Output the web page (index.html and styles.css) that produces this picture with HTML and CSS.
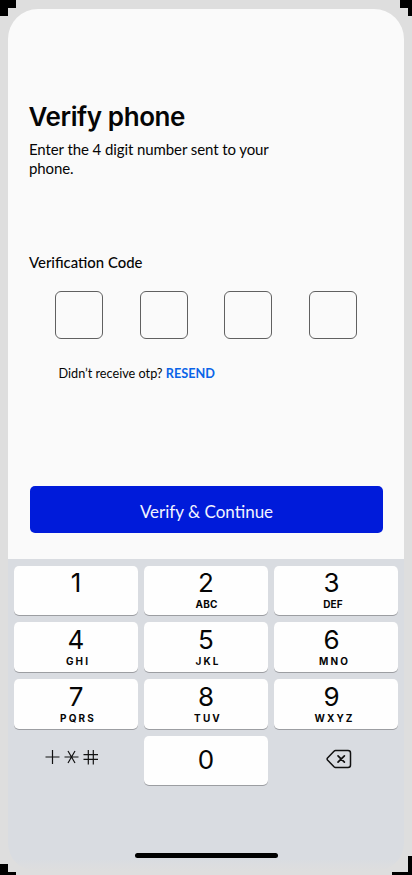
FILE: index.html
```html
<!DOCTYPE html>
<html lang="en">
<head>
<meta charset="utf-8">
<title>Verify phone</title>
<link rel="stylesheet" href="styles.css">
</head>
<body>
<div class="device">
  <main class="screen">
    <h1 class="title">Verify phone</h1>
    <p class="intro">Enter the 4 digit number sent to your<br>phone.</p>
    <h2 class="label">Verification Code</h2>
    <div class="code"><span class="box"></span><span class="box"></span><span class="box"></span><span class="box"></span></div>
    <p class="resend">Didn’t receive otp? <a class="link">RESEND</a></p>
    <button class="submit">Verify &amp; Continue</button>
  </main>
  <section class="keyboard">
    <div class="keys">
      <div class="key"><span class="digit">1</span></div>
      <div class="key"><span class="digit">2</span><span class="letters tight">ABC</span></div>
      <div class="key"><span class="digit">3</span><span class="letters tight">DEF</span></div>
      <div class="key low"><span class="digit">4</span><span class="letters">GHI</span></div>
      <div class="key low"><span class="digit">5</span><span class="letters">JKL</span></div>
      <div class="key low"><span class="digit">6</span><span class="letters">MNO</span></div>
      <div class="key low"><span class="digit">7</span><span class="letters">PQRS</span></div>
      <div class="key low"><span class="digit">8</span><span class="letters">TUV</span></div>
      <div class="key low"><span class="digit">9</span><span class="letters">WXYZ</span></div>
      <div class="plain symbols">
        <svg width="54" height="16" viewBox="0 0 54 16" fill="none" stroke="#111" stroke-width="1.2"><path d="M.5 8H14.500M7.500 1v14M19.500 8H33.500M23 2l7 12M30 2l-7 12M38.500 5.600H53M38.500 10.400H53M43.300 1v14.500M48.300 1v14.500"/></svg>
      </div>
      <div class="key zero"><span class="digit">0</span></div>
      <div class="plain erase">
        <svg width="26" height="20" viewBox="0 0 26 20" fill="none" stroke="#111" stroke-width="1.500" stroke-linejoin="round" stroke-linecap="round"><path d="M9.500 1.500H22Q24.500 1.500 24.500 4V16Q24.500 18.500 22 18.500H9.500Q8.700 18.500 8 17.800L1.500 11Q.7 10 1.500 9L8 2.200Q8.700 1.500 9.500 1.500Z"/><path stroke-width="1.700" d="M12 6.800l6.400 6.400M18.400 6.800L12 13.200"/></svg>
      </div>
    </div>
    <div class="home"></div>
  </section>
  <i class="corner tl-a"></i><i class="corner tl-b"></i>
  <i class="corner tr-a"></i><i class="corner tr-b"></i>
  <i class="corner bl-a"></i><i class="corner bl-b"></i>
  <i class="corner br-a"></i><i class="corner br-b"></i>
</div>
</body>
</html>
```
FILE: styles.css
```css
* { box-sizing: border-box; margin: 0; padding: 0; }
body { background: #dedede; overflow: hidden; }
.device {
  position: relative;
  width: 412px;
  height: 875px;
  padding: 9px 8px 0;
  background: #dedede;
  color: #050505;
  font-family: Lato, sans-serif;
}
.screen {
  height: 550px;
  padding: 92px 21px 0;
  background: #fafafa;
  border-radius: 30px 30px 0 0;
}
.title {
  height: 32px;
  margin-left: -0.5px;
  font: 600 26px/32px Inter, sans-serif;
  letter-spacing: -0.4px;
}
.intro {
  margin-top: 7px;
  font-size: 15px;
  line-height: 19px;
  letter-spacing: -0.09px;
  font-variant-ligatures: common-ligatures;
}
.label {
  margin-top: 73px;
  font-size: 14.9px;
  font-weight: 500;
  line-height: 22px;
}
.code {
  display: flex;
  justify-content: space-between;
  width: 302px;
  margin: 18px 0 0 26px;
}
.box {
  width: 48px;
  height: 48px;
  border: 1px solid #606060;
  border-radius: 6px;
}
.resend {
  margin: 24px 0 0 29.5px;
  font-size: 12.68px;
  line-height: 20px;
}
.link { color: #0a64e8; font-weight: 700; }
.submit {
  display: block;
  width: 353px;
  height: 47px;
  margin: 103px 0 0 1px;
  padding-top: 4px;
  border: 0;
  border-radius: 5px;
  background: #001bda;
  color: #f2f4ff;
  font: 17px/20px Lato, sans-serif;
}
.keyboard {
  height: 312px;
  padding: 7px 6px 0;
  background: linear-gradient(#d9dce1 300px, #dedede 312px);
  border-radius: 0 0 28px 28px;
}
.keys {
  display: grid;
  grid-template-columns: repeat(3, 124px);
  grid-template-rows: 49px 50px 50px 49px;
  gap: 7px 6px;
}
.key {
  display: flex;
  flex-direction: column;
  align-items: center;
  padding-top: 1px;
  background: #fefefe;
  border-radius: 5px;
  box-shadow: 0 1px 0 #9c9ea2;
  font-family: Inter, sans-serif;
}
.low { padding-top: 2px; }
.digit { font-size: 26px; line-height: 32px; }
.key:nth-child(3n) .digit { margin-right: 9px; }
.key:nth-child(3n) .letters { margin-right: 7px; }
.letters {
  margin-top: -1px;
  padding-left: 4px;
  font-size: 10px;
  font-weight: 700;
  line-height: 13px;
  letter-spacing: 2.1px;
}
.tight { letter-spacing: 0.1px; padding-left: 1px; }
.zero { padding-top: 8px; }
.symbols { padding: 13px 0 0 31px; }
.erase { padding: 13px 0 0 52px; }
.plain svg { display: block; }
.home {
  width: 143px;
  height: 5px;
  margin: 68px auto 0;
  border-radius: 3px;
  background: #000;
}
.corner { position: absolute; background: #000; }
.tl-a { left: 0; top: 0; width: 16px; height: 8px; }
.tl-b { left: 0; top: 0; width: 8px; height: 16px; }
.tr-a { right: 0; top: 0; width: 12px; height: 8px; }
.tr-b { right: 0; top: 0; width: 4px; height: 16px; }
.bl-a { left: 0; bottom: 0; width: 16px; height: 3px; }
.bl-b { left: 0; bottom: 0; width: 8px; height: 11px; }
.br-a { right: 0; bottom: 0; width: 20px; height: 3px; }
.br-b { right: 0; bottom: 0; width: 4px; height: 19px; }
```
